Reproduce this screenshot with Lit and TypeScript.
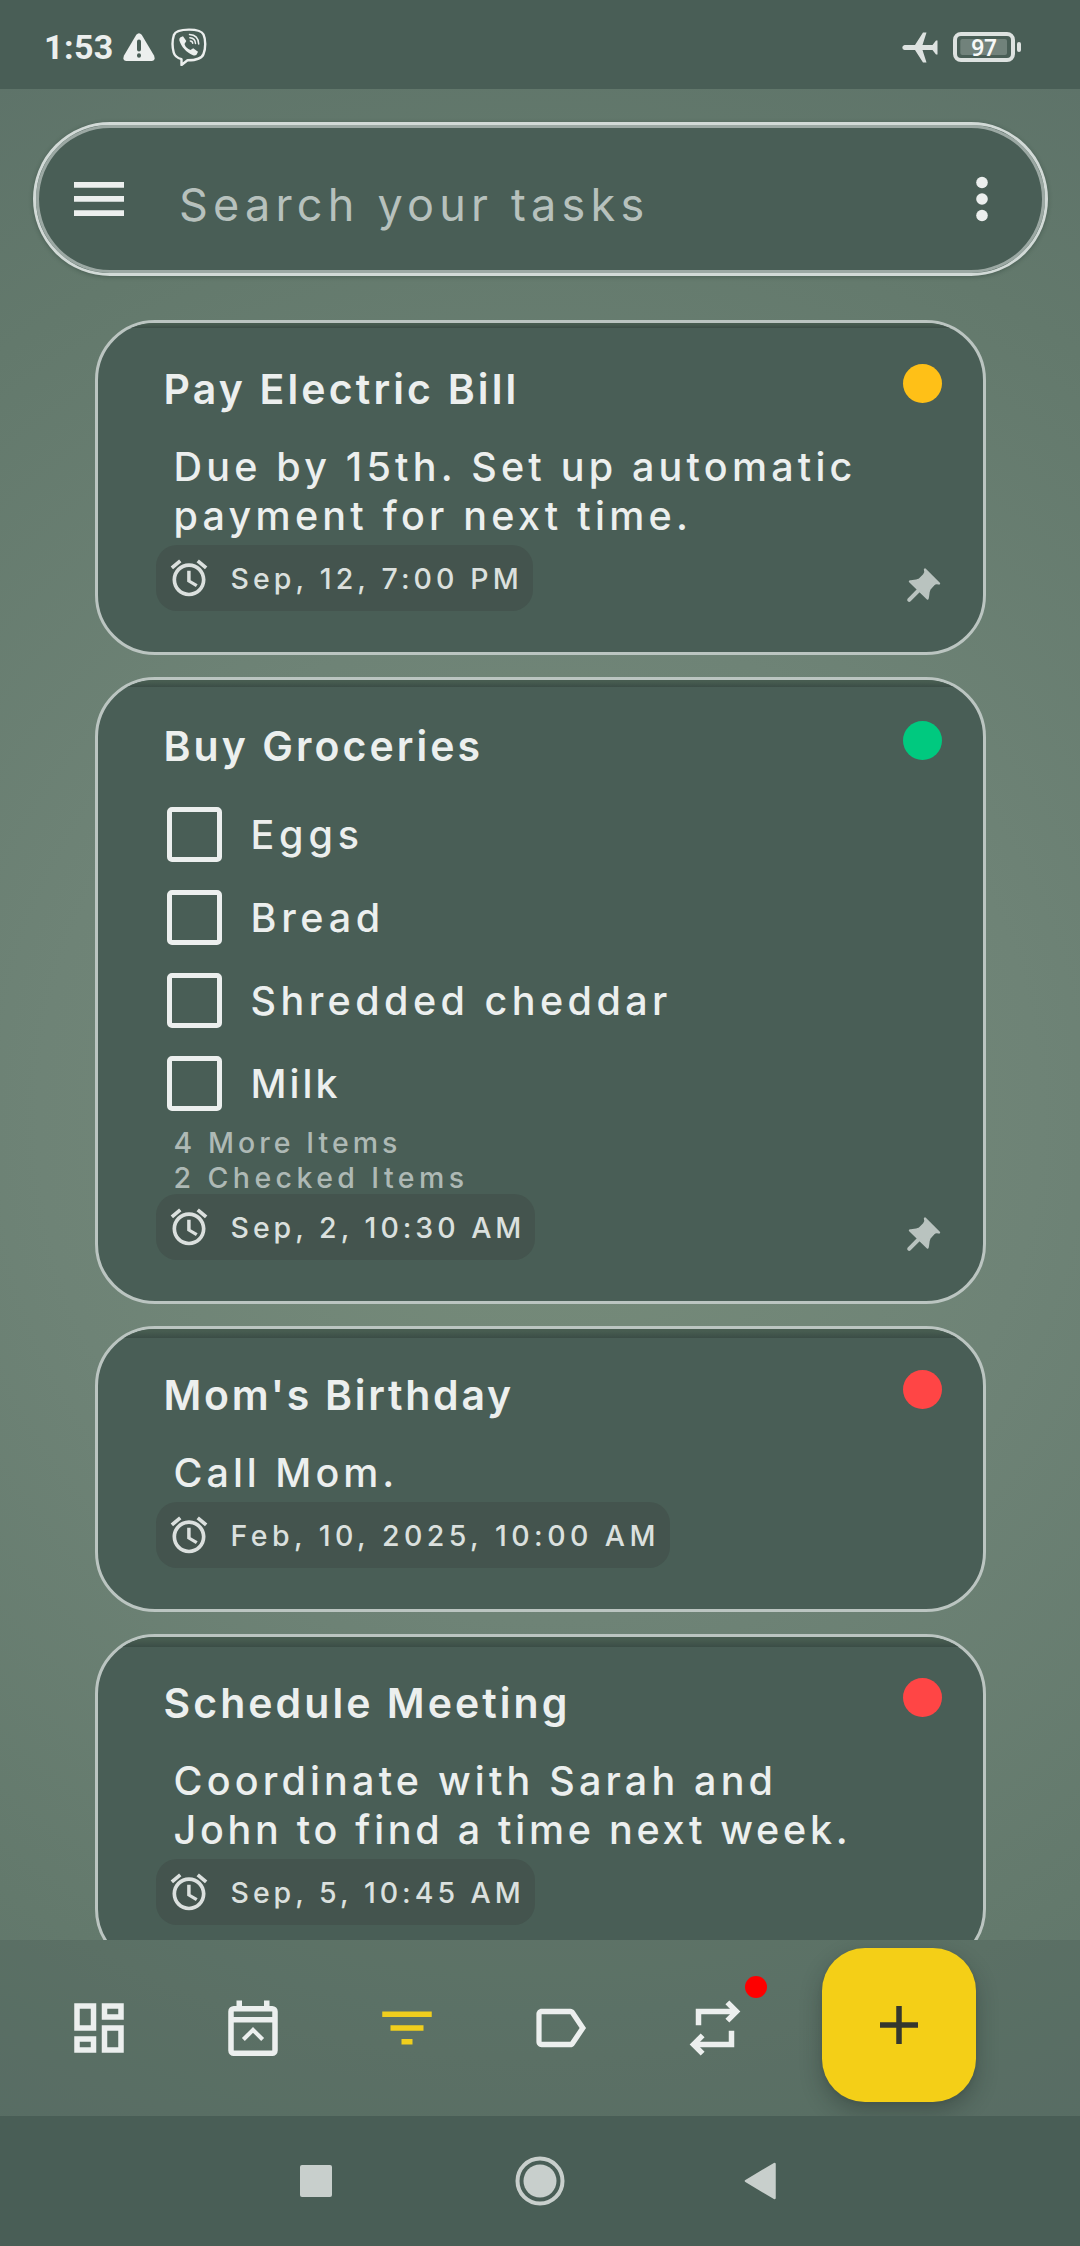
import { LitElement, html, css, nothing } from "lit";
import { customElement, property } from "lit/decorators.js";

interface Line { t: string; ls: number }
interface Task {
  title: Line; color: string; body?: Line[]; checks?: Line[]; more?: Line[];
  due: Line; pinned: boolean; shade: number;
}

const TASKS: Task[] = [
  { title: { t: "Pay Electric Bill", ls: 3.15 }, color: "#ffc017", pinned: true, shade: 5,
    body: [{ t: "Due by 15th. Set up automatic", ls: 4.2 }, { t: "payment for next time.", ls: 4.24 }],
    due: { t: "Sep, 12, 7:00 PM", ls: 4.1 } },
  { title: { t: "Buy Groceries", ls: 3.05 }, color: "#00c97f", pinned: true, shade: 7,
    checks: [{ t: "Eggs", ls: 4.8 }, { t: "Bread", ls: 4.7 }, { t: "Shredded cheddar", ls: 4.44 }, { t: "Milk", ls: 3 }],
    more: [{ t: "4 More Items", ls: 4.05 }, { t: "2 Checked Items", ls: 4.42 }],
    due: { t: "Sep, 2, 10:30 AM", ls: 3.98 } },
  { title: { t: "Mom's Birthday", ls: 2.73 }, color: "#ff4545", pinned: false, shade: 9,
    body: [{ t: "Call Mom.", ls: 4 }],
    due: { t: "Feb, 10, 2025, 10:00 AM", ls: 4.44 } },
  { title: { t: "Schedule Meeting", ls: 3.05 }, color: "#ff4545", pinned: false, shade: 10,
    body: [{ t: "Coordinate with Sarah and", ls: 4.17 }, { t: "John to find a time next week.", ls: 3.72 }],
    due: { t: "Sep, 5, 10:45 AM", ls: 3.98 } },
];

const line = (l: Line, cls: string) =>
  html`<div class=${cls}><span style="letter-spacing:${l.ls}px">${l.t}</span></div>`;

@customElement("task-card")
class TaskCard extends LitElement {
  @property({ attribute: false }) task!: Task;
  static styles = css`
    :host { display: block; position: relative; box-sizing: border-box; width: 891px; flex: none;
      border: 3px solid #bbc5c1; border-radius: 60px; background: #495e56; overflow: hidden;
      padding: 0 58px 41px; color: #ecefee; }
    .shade { margin: 0 -58px; background: linear-gradient(#475c50 25%, #3b4d46); }
    .head { display: flex; justify-content: space-between; align-items: flex-start; height: 110px; }
    .title { font-size: 41px; font-weight: 600; line-height: 50px; white-space: nowrap; padding: 41px 0 0 8px; }
    .dot { width: 39px; height: 39px; border-radius: 50%; margin: 41px -17px 0 0; }
    .body { font-size: 39.5px; font-weight: 450; line-height: 49px; height: 49px; white-space: nowrap; padding-left: 18px; }
    .bodies { padding-top: 10px; padding-bottom: 4px; }
    .checks { padding-top: 3px; margin-bottom: -1px; }
    .row { display: flex; align-items: center; height: 83px; padding-left: 11px; gap: 29px; }
    .box { box-sizing: border-box; width: 55px; height: 55px; border: 5px solid #ecefee; border-radius: 5px; }
    .item { font-size: 39.5px; font-weight: 450; line-height: 49px; padding-top: 2px; white-space: nowrap; }
    .more { box-sizing: border-box; font-size: 28.5px; font-weight: 450; line-height: 35px; height: 35px; padding: 1px 0 0 18px; color: #aeb9b5; white-space: nowrap; }
    .foot { display: flex; justify-content: space-between; align-items: flex-end; height: 66px; }
    .chip { display: flex; align-items: center; box-sizing: border-box; height: 66px; border-radius: 21px;
      background: #44544e; padding: 0 10px 0 11px; gap: 20px; color: #dbe0de; }
    .chip svg { width: 44px; height: 44px; display: block; }
    .due { font-size: 28.5px; font-weight: 450; line-height: 36px; padding-top: 2px; white-space: nowrap; }
    .pin { width: 44px; height: 44px; display: block; margin: 0 -20px 5px 0; color: #b9c3bf; }
  `;
  render() {
    const t = this.task;
    return html`
      <div class="shade" style="height:${t.shade}px;margin-bottom:${-t.shade}px"></div>
      <div class="head">${line(t.title, "title")}<div class="dot" style="background:${t.color}"></div></div>
      ${t.body ? html`<div class="bodies">${t.body.map((b) => line(b, "body"))}</div>` : nothing}
      ${t.checks ? html`<div class="checks">${t.checks.map((c) => html`
        <div class="row"><div class="box"></div>${line(c, "item")}</div>`)}</div>` : nothing}
      ${t.more ? t.more.map((m) => line(m, "more")) : nothing}
      <div class="foot">
        <div class="chip">
          <svg viewBox="0 0 24 24" fill="currentColor"><path d="M22 5.720l-4.600-3.860-1.290 1.530 4.600 3.860L22 5.720zM7.880 3.390L6.600 1.860 2 5.710l1.290 1.530 4.590-3.850zM12.500 8H11v6l4.750 2.850.95-1.430-3.800-2.170V8zM12 4c-4.970 0-9 4.030-9 9s4.020 9 9 9c4.970 0 9-4.030 9-9s-4.030-9-9-9zm0 16c-3.870 0-7-3.130-7-7s3.130-7 7-7 7 3.130 7 7-3.130 7-7 7z"/></svg>
          ${line(t.due, "due")}
        </div>
        ${t.pinned ? html`<svg class="pin" viewBox="0 0 44 44" fill="currentColor" stroke="currentColor" stroke-linejoin="round" stroke-linecap="round"><path stroke-width="2.400" d="M24 7.500L38 21.500C35.500 20.500 34 20.800 32.500 22.500L28.500 27C27 30 27.500 32.500 26.500 36.500L9 19.500C12.500 19 15 19.300 18.500 17.500L23 13C24.500 11.500 25 9.500 24 7.500Z"/><path stroke-width="4" fill="none" d="M18 28L8.200 37.800"/></svg>` : nothing}
      </div>`;
  }
}

@customElement("app-root")
class AppRoot extends LitElement {
  static styles = css`
    :host { display: flex; flex-direction: column; width: 1080px; height: 2246px; overflow: hidden;
      font-family: Inter, "Liberation Sans", sans-serif; color: #ecefee;
      background: radial-gradient(circle 1250px at 540px 1120px, #778c7a 0, #6e8376 40%, #63796c 75%, #5c7168 100%); }
    .status { flex: none; height: 89px; background: #495e56; display: flex; align-items: center;
      padding: 5px 59px 0 44px; box-sizing: border-box; }
    .time { font: 700 34px/40px Roboto, sans-serif; letter-spacing: .4px; }
    .status svg { display: block; }
    .warn { margin-left: 9px; } .viber { margin-left: 16px; }
    .grow { flex: 1; }
    .plane { margin-right: 15px; }
    .search { flex: none; box-sizing: border-box; margin: 33px 32px 44px 33px; height: 154px; border: 3px solid #d2dad7;
      border-radius: 77px; background: #495e56; box-shadow: inset 0 0 0 3px #9ba8a3, 0 1px 4px rgba(30,50,40,.35);
      display: flex; align-items: center; padding: 0 57px 0 38px; }
    .hint { flex: 1; font-size: 45px; line-height: 56px; color: #b7c1bd; padding: 12px 0 0 55px; white-space: nowrap; }
    .list { flex: none; height: 1620px; overflow: hidden; display: flex; flex-direction: column; align-items: center; gap: 22px; }
    .tabs { flex: none; height: 176px; background: rgba(74,93,86,.3); display: flex; padding-left: 66px; box-sizing: border-box; align-items: flex-start; }
    .tab { position: relative; width: 154px; height: 66px; margin-top: 55px; }
    .tab svg { width: 66px; height: 66px; display: block; }
    .on { color: #f0ce1d; }
    .badge { position: absolute; left: 63px; top: -19px; width: 22px; height: 22px; border-radius: 50%; background: #fe0000; }
    .fab { width: 154px; height: 154px; border-radius: 43px; background: #f4cf17; margin: 8px 0 0 -14px;
      box-shadow: 0 10px 22px rgba(20,30,25,.3), 0 1px 4px rgba(20,30,25,.08); display: grid; place-items: center; }
    .nav { position: relative; flex: none; height: 130px; background: #495e56; display: flex; justify-content: center; align-items: center; color: #c8cfcc; }
    .nav svg { display: block; }
  `;
  render() {
    return html`
      <div class="status">
        <span class="time">1:53</span>
        <svg class="warn" width="32" height="28" viewBox="0 0 32 28"><path fill="#ecefee" d="M13.300 1.800Q16-1.400 18.700 1.800L31 22.500Q33 27.500 28.500 28H3.500Q-1 27.500 1 22.500Z"/><path d="M16 8.500v8M16 22.300v.4" stroke="#495e56" stroke-width="4" stroke-linecap="round"/></svg>
        <svg class="viber" width="36" height="38" viewBox="0 0 36 38" fill="none" stroke="#ecefee"><path stroke-width="2.400" stroke-linejoin="round" d="M18 1.600C27 1.600 31 3.300 32.500 6.500C34.800 11.500 34.800 20 32.500 26C31 30.500 25 32.300 16.500 32.300L10.500 37V31.200C6 30 3.500 27.500 2.700 24.500C1.200 19 1.200 12.500 2.900 7C4.500 2.500 10 1.600 18 1.600Z"/><path fill="#ecefee" stroke="none" d="M9.500 9.200L12 8.300L15.300 13L13.500 16C14.500 19.200 16.500 21 19.500 22L22.200 20.300L27 23.700L25.700 26.500Q24.200 28.200 22 27.300C15 24 10.500 19 8.300 12.200Q8 10.200 9.500 9.200Z"/><path stroke-width="1.500" stroke-linecap="round" d="M18.500 6.500C24 6.800 27.500 10.300 27.700 16M18.900 9.800C22.300 10 24.300 12.200 24.500 15.500M19.300 12.900Q21.500 13 21.700 15.300"/></svg>
        <span class="grow"></span>
        <svg class="plane" width="36" height="31" viewBox="0 0 36 31"><path fill="#dde2e0" d="M2.500 13H13L21 .5H24.500L20.500 13H30.500L34 8.500H35.500V22.500H34L30.500 18H20.500L24.500 30.500H21L13 18H2.500Q.3 17.500.3 15.500T2.500 13Z"/></svg>
        <svg width="68" height="30" viewBox="0 0 68 30"><rect x="2" y="2" width="58" height="26" rx="6" fill="none" stroke="#dde2e0" stroke-width="4"/><rect x="7.300" y="7" width="46.700" height="16" rx="2" fill="#71827b"/><rect x="64" y="10" width="4" height="10" rx="2" fill="#dde2e0"/><text x="31" y="23.700" text-anchor="middle" font-family="Noto Sans" font-weight="600" font-size="22.500" fill="#f6f8f7">97</text></svg>
      </div>
      <div class="search">
        <svg width="50" height="34" viewBox="0 0 50 34" fill="#ecefee"><path d="M0 0h50v5.700H0zM0 14.100h50v5.700H0zM0 28.200h50v5.700H0z"/></svg>
        <div class="hint"><span style="letter-spacing:5.200px">Search your tasks</span></div>
        <svg width="12" height="46" viewBox="0 0 12 46" fill="#ecefee"><circle cx="6" cy="6.500" r="5.800"/><circle cx="6" cy="23" r="5.800"/><circle cx="6" cy="39.500" r="5.800"/></svg>
      </div>
      <div class="list">${TASKS.map((t) => html`<task-card .task=${t}></task-card>`)}</div>
      <div class="tabs">
        <div class="tab"><svg viewBox="0 0 24 24" fill="currentColor"><path d="M19 5v2h-4V5h4M9 5v6H5V5h4m10 8v6h-4v-6h4M9 17v2H5v-2h4M21 3h-8v6h8V3zM11 3H3v10h8V3zm10 8h-8v10h8V11zm-10 4H3v6h8v-6z"/></svg></div>
        <div class="tab"><svg viewBox="0 0 24 24" fill="none" stroke="currentColor" stroke-width="2"><rect x="4" y="5" width="16" height="16.200" rx="1"/><path d="M4 9h16M7 2v3M17 2v3"/><path d="M8.500 16.200L12 12.700l3.500 3.500" stroke-width="1.500"/></svg></div>
        <div class="tab on"><svg viewBox="0 0 24 24" fill="currentColor"><path d="M10 18h4v-2h-4v2zM3 6v2h18V6H3zm3 7h12v-2H6v2z"/></svg></div>
        <div class="tab"><svg viewBox="0 0 24 24" fill="currentColor"><path d="M17.630 5.840C17.270 5.330 16.670 5 16 5L5 5.010C3.900 5.010 3 5.900 3 7v10c0 1.100.9 1.990 2 1.990L16 19c.67 0 1.270-.33 1.630-.84L22 12l-4.370-6.160zM16 17H5V7h11l3.550 5L16 17z" transform="translate(0.200 0) scale(.95 1)"/></svg></div>
        <div class="tab"><svg viewBox="0 0 24 24" fill="none" stroke="currentColor" stroke-width="2"><path d="M6 11V6h14M18 13v5H4"/><path d="M16.500 2.700L19.800 6l-3.300 3.300M7.500 14.700L4.200 18l3.300 3.300"/></svg><div class="badge"></div></div>
        <div class="fab"><svg width="40" height="40" viewBox="0 0 40 40"><path d="M20 1v38M1 20h38" stroke="#35372e" stroke-width="5.500"/></svg></div>
      </div>
      <div class="nav">
        <svg width="480" height="50" viewBox="0 0 480 50" fill="currentColor"><rect x="0" y="9" width="32" height="32" rx="2"/><circle cx="240" cy="25" r="22.500" fill="none" stroke="currentColor" stroke-width="4"/><circle cx="240" cy="25" r="16.500"/><path d="M446 25L474.500 8V42Z" stroke="currentColor" stroke-width="2.500" stroke-linejoin="round"/></svg>
      </div>`;
  }
}
